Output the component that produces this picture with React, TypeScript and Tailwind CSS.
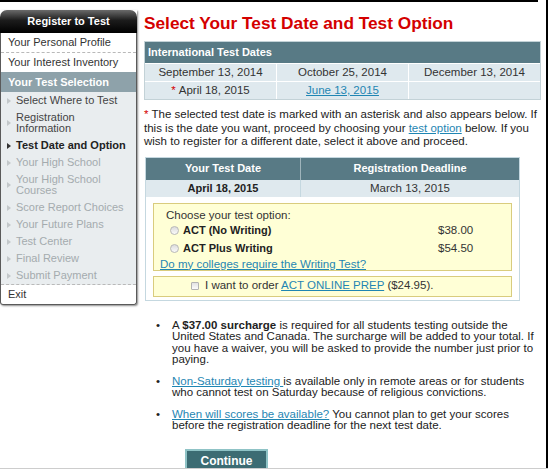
import React from "react";

type StepState = "done" | "current" | "todo";

interface Step {
  lines: string[];
  state: StepState;
}

// registration wizard steps under "Your Test Selection"
const steps: Step[] = [
  { lines: ["Select Where to Test"], state: "done" },
  { lines: ["Registration", "Information"], state: "done" },
  { lines: ["Test Date and Option"], state: "current" },
  { lines: ["Your High School"], state: "todo" },
  { lines: ["Your High School", "Courses"], state: "todo" },
  { lines: ["Score Report Choices"], state: "todo" },
  { lines: ["Your Future Plans"], state: "todo" },
  { lines: ["Test Center"], state: "todo" },
  { lines: ["Final Review"], state: "todo" },
  { lines: ["Submit Payment"], state: "todo" },
];

const linkCls = "text-[#1f86b3] underline";

const StepRow: React.FC<{ step: Step }> = ({ step }) => {
  const textCls =
    step.state === "current"
      ? "font-bold text-[#222]"
      : step.state === "done"
      ? "text-[#444]"
      : "text-[#a4abae]";
  const arrowCls =
    step.state === "current" ? "border-l-[#333]" : "border-l-[#c3c8ca]";
  return (
    <div className="flex items-center py-[3px] leading-[11px]">
      <span className="w-[15px] flex justify-center">
        <span
          className={`w-0 h-0 border-l-[4px] border-y-[3px] border-y-transparent ${arrowCls}`}
        />
      </span>
      <span className={textCls}>
        {step.lines.map((l, i) => (
          <span key={i} className="block">
            {l}
          </span>
        ))}
      </span>
    </div>
  );
};

const Sidebar: React.FC = () => (
  <div className="mt-[8px] w-[137px] self-start shrink-0 text-[11px] rounded-b-[3px] shadow-[1px_1px_2px_rgba(0,0,0,0.45)]">
    <div className="h-[23px] rounded-t-[7px] bg-[linear-gradient(#6a6a6a,#1c1c1c_45%,#000)] flex items-center justify-center text-white font-bold">
      Register to Test
    </div>
    <div className="border-x border-b border-[#5a5a5a] rounded-b-[3px] overflow-hidden">
      <div className="h-[20px] flex items-center pl-[7px] text-[#333] border-b border-dashed border-[#b9b9b9]">
        Your Personal Profile
      </div>
      <div className="h-[19px] flex items-center pl-[7px] text-[#333]">
        Your Interest Inventory
      </div>
      <div className="h-[20px] flex items-center pl-[7px] bg-[#8ea2aa] text-white font-bold">
        Your Test Selection
      </div>
      <div className="bg-[#e9edef] border-b border-dashed border-[#b9b9b9]">
        {steps.map((s, i) => (
          <StepRow key={i} step={s} />
        ))}
      </div>
      <div className="h-[19px] flex items-center pl-[7px] text-[#333]">
        Exit
      </div>
    </div>
  </div>
);

const Radio: React.FC = () => (
  <span className="w-[9px] h-[9px] rounded-full border border-[#b8b8b8] bg-[linear-gradient(#dcdcdc,#fafafa)] shrink-0" />
);

const Main: React.FC = () => (
  <div className="ml-[7px] w-[397px] shrink-0 text-[11.5px]">
    <h1 className="mt-[11px] text-[17.25px] leading-[20px] font-bold text-[#d40000]">
      Select Your Test Date and Test Option
    </h1>

    {/* international dates */}
    <div className="mt-[8px] border border-[#c3d2d7] bg-white">
      <div className="h-[21px] bg-[#587a85] text-white font-bold text-[11px] flex items-center pl-[3px]">
        International Test Dates
      </div>
      <div className="grid grid-cols-3 gap-px pt-px bg-white text-[#333]">
        <div className="h-[17px] bg-[#dfe9ee] flex items-center justify-center">
          September 13, 2014
        </div>
        <div className="h-[17px] bg-[#dfe9ee] flex items-center justify-center">
          October 25, 2014
        </div>
        <div className="h-[17px] bg-[#dfe9ee] flex items-center justify-center">
          December 13, 2014
        </div>
        <div className="h-[17px] bg-[#dfe9ee] flex items-center justify-center">
          <span className="text-[#d40000] mr-[3px]">*</span>April 18, 2015
        </div>
        <div className="h-[17px] bg-[#dfe9ee] flex items-center justify-center">
          <span className={linkCls}>June 13, 2015</span>
        </div>
        <div className="h-[17px] bg-[#dfe9ee]" />
      </div>
    </div>

    <p className="mt-[8px] leading-[13.5px] text-[#222]">
      <span className="text-[#d40000]">*</span> The selected test date is
      marked with an asterisk and also appears below. If this is the date you
      want, proceed by choosing your <span className={linkCls}>test option</span>{" "}
      below. If you wish to register for a different date, select it above and
      proceed.
    </p>

    {/* chosen date and options */}
    <div className="mt-[8px] ml-px w-[375px] border border-[#c5d8e0]">
      <div className="grid grid-cols-[155px_1fr] h-[22px] bg-[#587a85] text-white font-bold text-[11px]">
        <div className="flex items-center justify-center border-r border-[#9fb4bb]">
          Your Test Date
        </div>
        <div className="flex items-center justify-center">
          Registration Deadline
        </div>
      </div>
      <div className="grid grid-cols-[155px_1fr] h-[17px] bg-[#dfe9ee] text-[#333]">
        <div className="flex items-center justify-center border-r border-[#c5d8e0] font-bold text-[11px] text-[#222]">
          April 18, 2015
        </div>
        <div className="flex items-center justify-center">March 13, 2015</div>
      </div>
      <div className="px-[7px] pt-[6px] pb-[3px] flex flex-col gap-[5px]">
        <div className="border border-[#d9cc7e] bg-[#ffffd6] pt-[4px]">
          <div className="pl-[12px] leading-[14px] text-[#333]">
            Choose your test option:
          </div>
          <div className="h-[18px] flex items-center pl-[16px] gap-[4px]">
            <Radio />
            <span className="w-[251px] font-bold text-[11px] text-[#222]">
              ACT (No Writing)
            </span>
            <span className="text-[#333]">$38.00</span>
          </div>
          <div className="h-[18px] flex items-center pl-[16px] gap-[4px]">
            <Radio />
            <span className="w-[251px] font-bold text-[11px] text-[#222]">
              ACT Plus Writing
            </span>
            <span className="text-[#333]">$54.50</span>
          </div>
          <div className="pl-[6px] leading-[12px]">
            <span className={linkCls}>
              Do my colleges require the Writing Test?
            </span>
          </div>
        </div>
        <div className="h-[21px] border border-[#d9cc7e] bg-[#ffffd6] flex items-center pl-[37px] gap-[6px] text-[#333]">
          <span className="w-[8px] h-[8px] border border-[#b3b3b3] bg-[linear-gradient(#e2e2e2,#fbfbfb)] rounded-[1px]" />
          <span>
            I want to order <span className={linkCls}>ACT ONLINE PREP</span>{" "}
            ($24.95).
          </span>
        </div>
      </div>
    </div>

    <ul className="mt-[19px] pr-[1px] flex flex-col gap-[10px] leading-[11.5px] text-[#222]">
      <li className="flex">
        <span className="w-[28px] shrink-0 pl-[12px]">•</span>
        <span>
          A <b>$37.00 surcharge</b> is required for all students testing
          outside the United States and Canada. The surcharge will be added to
          your total. If you have a waiver, you will be asked to provide the
          number just prior to paying.
        </span>
      </li>
      <li className="flex">
        <span className="w-[28px] shrink-0 pl-[12px]">•</span>
        <span>
          <span className={linkCls}>Non-Saturday testing </span>is available
          only in remote areas or for students who cannot test on Saturday
          because of religious convictions.
        </span>
      </li>
      <li className="flex">
        <span className="w-[28px] shrink-0 pl-[12px]">•</span>
        <span>
          <span className={linkCls}>When will scores be available?</span> You
          cannot plan to get your scores before the registration deadline for
          the next test date.
        </span>
      </li>
    </ul>

    <button className="mt-[17px] ml-[41px] w-[83px] h-[24px] border-2 border-[#8fc3c6] bg-[#3c6c73] text-white font-bold text-[12px]">
      Continue
    </button>
  </div>
);

export default function App() {
  return (
    <div className="w-[548px] h-[470px] bg-white overflow-hidden font-['Liberation_Sans',Arial,sans-serif] text-[11px] text-[#222]">
      <div className="flex h-[468px]">
        <div className="w-[546px] flex flex-col">
          <div className="h-[2px] w-[538px] bg-black shrink-0" />
          <div className="flex flex-1 min-h-0 overflow-hidden">
            <Sidebar />
            <Main />
          </div>
        </div>
        <div className="w-[2px] bg-black" />
      </div>
      <div className="h-px bg-[#cdcdcd]" />
    </div>
  );
}
